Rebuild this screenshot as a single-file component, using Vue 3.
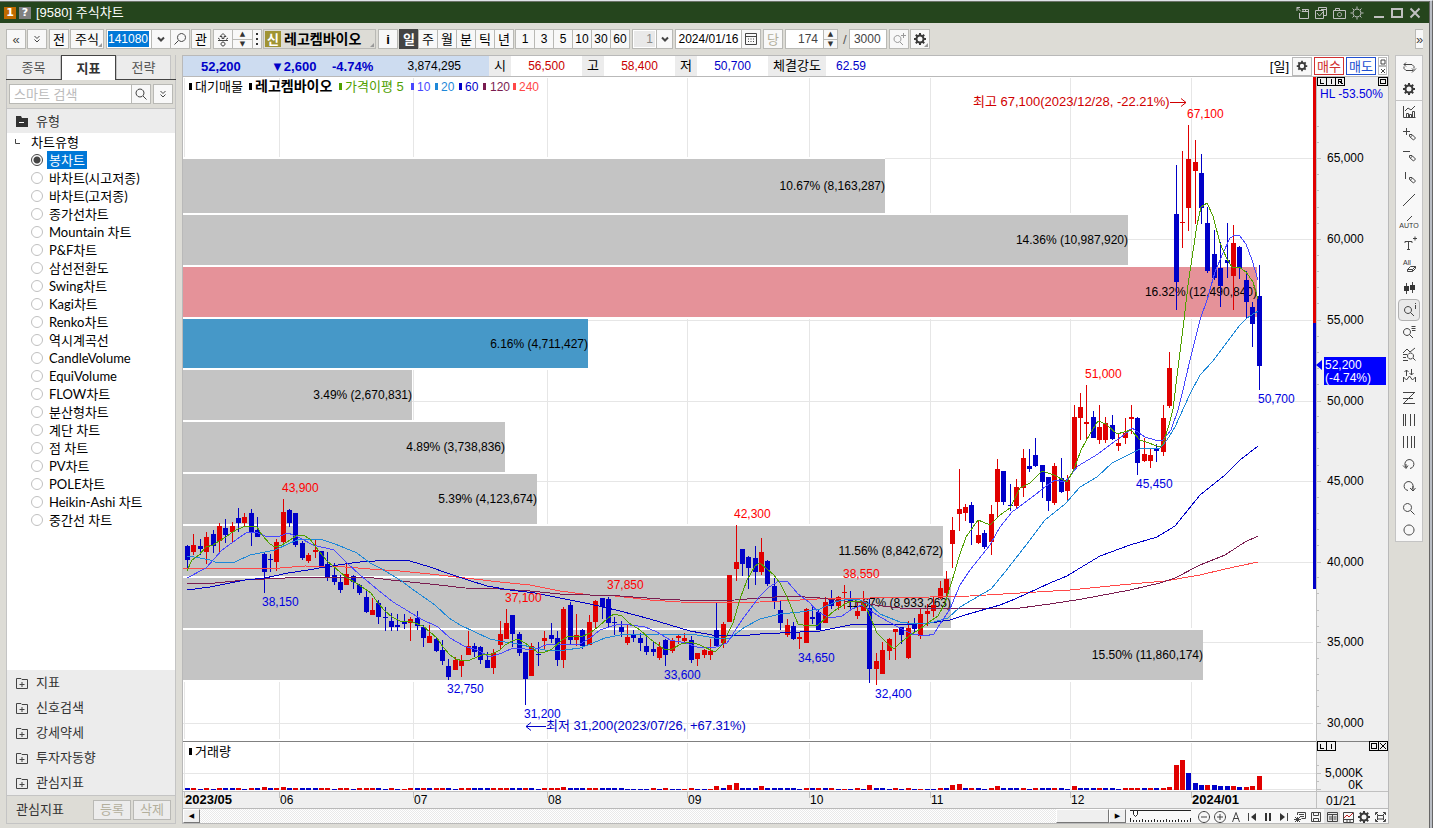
<script setup>
import { ref } from 'vue'

const candleRows = `
545 546 560 568 B|534 545 552 555 R|539 546 549 555 B|532 537 552 564 R|530 534 546 553 B|523 526 541 552 R|519 528 535 543 B|522 526 532 543 R|508 518 523 532 B|513 517 523 526 R
509 513 533 546 B|517 530 537 537 B|553 554 572 593 B|554 559 560 572 B|539 542 562 571 R|499 512 542 546 R|509 510 523 527 B|513 513 545 547 B|541 543 558 560 B|553 555 561 563 R
539 550 552 558 R|551 551 568 568 B|552 564 577 581 B|563 575 582 585 B|575 582 590 593 B|563 574 585 585 R|575 576 582 589 B|584 585 593 595 B|591 597 612 613 B|598 610 615 615 R
600 603 617 624 B|607 617 618 631 B|613 621 627 631 B|614 625 627 631 B|614 621 624 629 B|617 619 623 641 R|611 618 626 630 B|625 627 638 647 B|625 636 643 643 R|638 639 651 652 B
640 650 661 665 B|659 666 677 680 B|657 660 670 670 R|655 660 666 677 R|631 646 655 655 R|643 646 652 657 B|646 647 660 664 B|652 660 668 668 B|649 653 668 674 R|621 634 645 649 R
609 623 639 639 R|615 615 634 647 B|632 634 653 656 B|652 652 679 705 B|643 646 676 676 R|642 654 655 666 B|631 638 641 650 R|623 635 639 643 B|631 638 660 666 B|607 609 660 668 R
602 605 640 644 B|614 635 640 646 R|629 630 646 649 B|615 622 645 645 R|600 601 622 628 R|598 598 607 619 B|597 599 623 627 B|617 622 623 635 B|621 627 632 637 B|625 637 643 645 R
630 635 638 642 B|633 638 643 651 B|637 646 652 655 B|641 649 652 656 B|642 647 658 660 R|639 640 655 666 B|638 641 651 653 R|634 636 638 644 R|633 638 641 642 R|636 640 660 663 B
653 653 659 666 R|649 650 655 658 R|639 651 655 660 R|602 630 646 646 B|622 624 643 648 R|575 575 622 622 R|525 562 569 581 R|549 549 564 576 B|556 557 568 589 B|546 558 572 585 B
538 552 572 575 R|560 561 584 586 B|578 586 601 609 B|600 610 623 630 B|619 625 635 637 R|622 626 639 640 B|633 637 639 649 R|608 609 643 643 R|607 617 619 624 B|609 612 630 630 B
597 602 623 623 R|590 599 606 609 B|596 597 606 610 R|585 592 593 609 R|591 600 602 610 B|602 611 616 619 R|591 601 611 611 R|599 608 669 683 B|653 661 669 685 R|642 650 674 674 R
638 639 651 660 R|629 629 632 660 R|627 627 635 644 B|621 628 658 659 R|618 623 629 632 B|609 614 636 639 R|604 611 614 626 R|597 605 611 617 R|581 588 598 599 R|571 579 593 596 R
517 530 544 568 R|469 509 514 531 R|504 507 513 521 R|502 505 523 545 B|520 535 543 544 R|530 533 547 549 B|505 514 542 555 R|459 469 502 517 R|471 471 502 505 B|484 505 506 511 B
479 487 506 508 R|449 458 488 497 R|449 466 469 472 B|438 455 466 467 B|465 465 482 498 B|477 477 501 511 B|463 466 503 505 R|458 478 492 493 B|475 480 491 500 R|405 417 469 471 R
393 407 418 440 R|385 422 424 440 R|411 417 438 438 B|405 427 440 444 R|417 423 440 443 R|415 425 439 440 B|434 443 446 451 R|418 433 438 444 R|405 417 419 434 R|417 418 463 475 B
438 454 461 462 R|448 455 461 468 R|444 448 451 462 B|405 418 452 456 R|352 368 406 408 R|165 214 282 310 B|151 222 223 248 R|125 159 208 231 R|140 162 171 224 R|154 173 208 224 B
207 223 271 273 B|230 254 278 280 B|242 268 286 307 B|223 260 263 278 B|225 243 276 310 R|246 247 268 279 B|271 280 302 319 B|302 307 324 347 B|265 296 366 390 B`

const slotX = i => Math.round(187 + i * 6.378)
const candles = candleRows.trim().split(/[|\n]/).map((row, i) => {
  const [high, top, bottom, low, tone] = row.trim().split(' ')
  return { x: slotX(i), high: +high, top: +top, bottom: +bottom, low: +low, tone }
})

const volumeTones =
  'BRbRbRBBRb' + 'RBRBRRBRBB' + 'BRRbRRbRRR' + 'BbRbrRBRBR' + 'RBbRRBBBRR' + 'RBBRBbRRRR' +
  'BBBRRBBBBb' + 'bbbRbRbbrR' + 'bbrRBRRBBB' + 'RBBBBBbRBR' + 'BRbrbRbRBB' + 'bRbRbrbbRB' +
  'RRBRBbRRBB' + 'BRbRBBRBbR' + 'BBBRBBbRRR' + 'BRBRRRRBBB' + 'RBBBRBRRR'
const volumePeaks = {
  12: 3, 15: 3, 59: 3, 83: 4, 85: 5, 86: 7, 90: 4, 107: 5, 120: 5, 121: 6, 127: 4, 139: 4, 154: 3,
  155: 25, 156: 30, 157: 17, 158: 7, 159: 5, 160: 5, 161: 5, 162: 4, 163: 4, 164: 4, 165: 3, 166: 3, 167: 4, 168: 14
}
const volumes = [...volumeTones].map((c, i) => ({
  x: slotX(i) - 2,
  h: volumePeaks[i] || (c === c.toUpperCase() ? 2 : 1),
  tone: c.toUpperCase()
}))

const averages = [
  { name: 'ma240', points: '183,568 280,568 305,566 345,567 370,569 400,571 430,574 465,578 500,582 530,585 560,591 590,595 615,596 650,600 680,602 720,603 760,602 800,600 835,598 870,598 930,597 970,596 1020,593 1070,590 1120,585 1165,581 1200,575 1225,569 1258,562' },
  { name: 'ma120', points: '187,583 215,583 245,580 305,577 340,577 365,577 400,581 430,584 465,588 500,589 530,591 560,594 620,596 660,599 700,601 735,600 760,598 790,596 820,598 835,600 855,602 875,605 900,608 930,609 955,608 1020,608 1050,604 1082,599 1130,590 1160,583 1175,578 1200,565 1225,555 1245,542 1258,536' },
  { name: 'ma60', points: '187,589 195,589 210,587 245,580 265,578 288,573 308,570 325,567 345,564 360,562 390,560 410,561 430,567 447,573 468,580 487,586 510,590 535,593 560,598 590,604 620,611 650,619 690,631 712,635 740,636 760,634 800,632 820,631 850,625 870,624 900,625 930,623 950,620 965,615 1000,605 1015,599 1050,583 1067,576 1080,568 1100,556 1130,545 1157,537 1175,526 1200,495 1225,475 1240,460 1258,446' },
  { name: 'ma20', points: '187,556 200,558 210,560 218,563 235,562 250,555 275,550 290,543 300,539 320,539 335,544 345,548 357,553 370,563 382,569 400,580 415,591 435,605 449,618 460,625 475,632 490,639 505,642 518,644 535,648 545,650 565,650 580,648 593,643 605,638 620,635 660,634 685,634 697,635 715,638 730,638 745,627 760,619 780,614 800,612 820,609 835,602 848,599 860,600 870,605 880,614 900,622 915,624 930,623 948,618 960,607 972,600 991,589 1005,572 1030,540 1045,520 1065,504 1080,487 1097,477 1112,463 1140,449 1160,448 1167,440 1175,427 1190,394 1200,375 1213,361 1225,345 1240,325 1247,318 1258,311' },
  { name: 'ma10', points: '187,578 206,568 222,550 240,537 246,533 256,532 265,536 280,536 288,533 300,538 313,545 334,550 346,562 360,575 378,590 393,602 408,611 421,619 438,627 450,638 464,646 477,650 490,657 502,653 513,648 525,649 534,650 548,644 562,644 580,644 590,638 600,630 612,626 620,624 630,625 645,627 657,632 670,640 686,643 697,647 713,648 727,643 742,620 759,597 769,587 779,581 787,581 798,594 809,602 818,612 830,618 842,616 852,609 862,605 868,609 880,617 900,628 912,634 925,636 934,634 940,624 950,609 960,585 970,570 990,545 1000,527 1012,512 1035,495 1046,486 1055,480 1065,482 1078,466 1098,454 1111,444 1124,435 1132,428 1145,437 1155,440 1163,440 1171,430 1178,410 1183,390 1190,360 1200,320 1207,300 1215,272 1223,253 1230,238 1235,235 1239,235 1246,244 1252,260 1258,280' },
  { name: 'ma5', points: '187,571 192,560 199,555 206,547 213,545 219,541 226,537 231,533 238,529 246,526 257,527 262,535 270,544 275,547 282,545 290,540 296,536 303,535 310,539 319,551 327,561 333,566 340,572 347,578 356,583 371,593 378,603 385,611 392,617 400,621 412,622 423,626 430,632 437,638 443,647 450,655 456,659 463,661 470,660 482,655 492,654 500,650 505,645 512,641 518,639 525,643 532,648 537,652 543,653 552,649 562,640 569,636 581,637 590,633 599,626 608,618 614,614 622,616 629,623 640,630 650,639 664,649 672,649 681,644 690,642 700,645 715,652 722,645 733,623 740,599 747,580 755,566 760,563 767,569 774,575 780,583 787,597 798,624 808,626 818,625 826,618 834,611 850,601 860,601 867,609 877,633 888,644 894,649 900,643 912,634 920,629 929,622 938,616 945,603 952,581 959,557 966,537 978,520 990,525 1000,515 1010,508 1020,488 1030,483 1042,471 1054,475 1067,482 1074,469 1081,450 1090,434 1098,421 1106,424 1117,434 1131,430 1140,440 1160,447 1163,444 1169,425 1173,409 1179,360 1184,320 1188,285 1192,258 1197,225 1201,207 1207,203 1213,216 1220,243 1227,259 1232,267 1239,267 1246,272 1253,282 1258,299' }
]

const profile = [
  { y: 159, h: 54, end: 885, text: '10.67% (8,163,287)', tone: 'plain' },
  { y: 215, h: 50, end: 1128, text: '14.36% (10,987,920)', tone: 'plain' },
  { y: 267, h: 50, end: 1257, text: '16.32% (12,490,840)', tone: 'peak' },
  { y: 319, h: 49, end: 588, text: '6.16% (4,711,427)', tone: 'now' },
  { y: 370, h: 50, end: 412, text: '3.49% (2,670,831)', tone: 'plain' },
  { y: 422, h: 50, end: 505, text: '4.89% (3,738,836)', tone: 'plain' },
  { y: 474, h: 50, end: 537, text: '5.39% (4,123,674)', tone: 'plain' },
  { y: 526, h: 50, end: 943, text: '11.56% (8,842,672)', tone: 'plain' },
  { y: 578, h: 50, end: 951, text: '11.67% (8,933,263)', tone: 'plain' },
  { y: 630, h: 50, end: 1203, text: '15.50% (11,860,174)', tone: 'plain' }
]

const peaks = [
  [282, 492, '43,900'], [505, 602, '37,100'], [607, 589, '37,850'], [734, 518, '42,300'],
  [843, 578, '38,550'], [1085, 378, '51,000'], [1187, 118, '67,100']
]
const troughs = [
  [262, 606, '38,150'], [447, 693, '32,750'], [524, 718, '31,200'], [664, 679, '33,600'],
  [798, 662, '34,650'], [875, 698, '32,400'], [1136, 488, '45,450'], [1258, 403, '50,700']
]
const priceTicks = [[158, '65,000'], [239, '60,000'], [320, '55,000'], [401, '50,000'], [481, '45,000'], [562, '40,000'], [642, '35,000'], [723, '30,000']]
const minorTicks = Array.from({ length: 38 }, (_, i) => Math.round(126 + i * 16.12)).filter((y, i) => i % 5 !== 2)
const months = [[184, '2023/05', true], [279, '06'], [413, '07'], [547, '08'], [687, '09'], [809, '10'], [930, '11'], [1070, '12'], [1191, '2024/01', true]]
const legend = [
  [189, 195, '대기매물', '#000'], [249, 255, '레고켐바이오', '#000', 'name'], [339, 345, '가격이평 5', '#50a000'],
  [411, 417, '10', '#4848ff', 'digits'], [435, 441, '20', '#1e88d8', 'digits'], [459, 465, '60', '#0000c8', 'digits'],
  [483, 490, '120', '#7a1d50', 'digits'], [513, 519, '240', '#ff4848', 'digits']
]

const chartTypes = [
  '봉차트', '바차트(시고저종)', '바차트(고저종)', '종가선차트', 'Mountain 차트', 'P&F차트', '삼선전환도', 'Swing차트', 'Kagi차트', 'Renko차트',
  '역시계곡선', 'CandleVolume', 'EquiVolume', 'FLOW차트', '분산형차트', '계단 차트', '점 차트', 'PV차트', 'POLE차트', 'Heikin-Ashi 차트', '중간선 차트'
]
const chosen = ref('봉차트')
const code = ref('141080')
const keyword = ref('')
const groups = ['지표', '신호검색', '강세약세', '투자자동향', '관심지표']
const periods = ['일', '주', '월', '분', '틱', '년']
const minutes = ['1', '3', '5', '10', '30', '60']

const gear = 'M8 2v3M8 11v3M2 8h3M11 8h3M3.8 3.8l2 2M10.2 10.2l2 2M3.8 12.2l2-2M10.2 5.8l2-2'
const topTools = [
  { label: '새로고침', d: 'M5 3.500L3 5.500l2 2M3 5.500h8l2 2v2M11 13.500l2-2M15 9.500l-2 2-2-2M3 7.500v2l2 2h7' },
  { label: '설정', gear: true }
]
const tools = [
  { label: '지표 추가', d: 'M2.500 2v11.500h12M5.500 13V9.500h2V13M8.500 13V10.500h2V13M11.500 13V7.500h2V13M4 7l3-3 3 2 4-4' },
  { label: '십자 그리기', d: 'M2 5.500h7M5.500 2v7M8.500 8.500h2.500l3.500 3.500-2 2L8.500 10.500zM9.500 11l2-2' },
  { label: '수평선', d: 'M2 3.500h7M8.500 7.500h2.500l3.500 3.500-2 2L8.500 9.500zM9.500 10l2-2' },
  { label: '수직선', d: 'M4.500 2v7M8.500 7.500h2.500l3.500 3.500-2 2L8.500 9.500zM9.500 10l2-2' },
  { label: '추세선', d: 'M2 14L14 2' },
  { label: '자동 추세선', d: 'M6 7l5-5', word: 'AUTO' },
  { label: '텍스트', d: 'M4 7V5.500h7V7M7.500 5.500v8M6 13.500h3M12 2.500h4M14 .5v4' },
  { label: '전체 지우기', d: 'M6.500 11.500l3-3h5v2l-3 3h-5zM6.500 11.500h5l3-3M11.500 11.500v2', tiny: 'All' },
  { label: '캔들', d: 'M5.500 3v11M11.500 2v11', fill: 'M3 6h5v5H3zM9 5h5v5H9z' },
  { label: '정보 조회', d: 'M7 4.500a3.500 3.500 0 1 0 .01 0M9.500 10.500l3.500 3.500M14.500 1v1M14.500 3v4', on: true },
  { label: '목록 조회', d: 'M6 4.500a3.500 3.500 0 1 0 .01 0M8.500 10.500l3.500 3.500M10.500 2.500h4M10.500 4.500h4M11 6.500h3.500' },
  { label: '차트 조회', d: 'M2 7l4-4 3 3 5-4M2 8.500h4M2 11.500h3M2 14.500h5M9.500 7a3 3 0 1 0 .01 0M12 12l2.500 2.500' },
  { label: '신호', d: 'M2.500 14V9l3 3 3-4 3 4 3-3v5M5.500 8V2M3.500 4l2-2 2 2M10.500 1v6M8.500 5l2 2 2-2' },
  { label: '지그재그', d: 'M2 2.500h12M2 13.500h12M2 8.500h10M13 3L3 13' },
  { label: '구간선', d: 'M2.500 2v12M4.500 2v12M9.500 2v12M13.500 2v12' },
  { label: '등간격선', d: 'M2.500 2v12M6.500 2v12M10.500 2v12M13.500 2v12' },
  { label: '되돌리기', d: 'M5 11a4.500 4.500 0 1 1 4 1.500M2 9.500l3 3 2-3M5 8v4' },
  { label: '다시 실행', d: 'M11 11a4.500 4.500 0 1 0-4 1.500M9 10l3 3 2.500-3M12 8v5' },
  { label: '확대', d: 'M6.500 3.500a4 4 0 1 0 .01 0M9.500 10.500l4 4' },
  { label: '원', d: 'M8 3a5 5 0 1 0 .01 0' }
]
const footTools = [
  { label: '축소', d: 'M8 2.500a5.500 5.500 0 1 0 .01 0M5 8h6' },
  { label: '확대', d: 'M8 2.500a5.500 5.500 0 1 0 .01 0M5 8h6M8 5v6' },
  { label: '자동', d: 'M4.500 13L8 3.500 11.500 13M5.500 9.500h5' },
  { label: '처음', d: 'M4.500 4v8', fill: 'M12 4v8L7 8z' },
  { label: '정지', fill: 'M5 4h2v8H5zM9 4h2v8H9z' },
  { label: '끝', d: 'M11.500 4v8', fill: 'M4 4v8l5-4z' },
  { label: '지표 삭제', d: 'M5.500 6V3.500h8v6h-4M7 5.500h5M8 7.500h4M3 8l5 5M8 8l-5 5M5.500 8v5M2 10.500h7' },
  { label: '저장', d: 'M3.500 3.500h9v9h-9zM5.500 3.500v3h5v-3M5.500 12.500v-3h5v3' },
  { label: '표', d: 'M3.500 3.500h10v9h-10zM3.500 5.500h10M5 8h3M5 10h3M9.500 8h3M9.500 10h3M8.500 6v6', on: true },
  { label: '미니 차트', d: 'M3.500 3.500h10v10h-10zM3.500 10.500h10M7 10.500v3M10 10.500v3', red: 'M4 9l3-3 2 2 4-4' },
  { label: '설정', gear: true },
  { label: '전체 화면', d: 'M3.500 6V3.500H6M11 3.500h2.500V6M13.500 10v2.500H11M6 12.500H3.500V10M5.500 6.500h6v3.500h-6zM4 4l2 2M13 4l-2 2M4 12l2-2M13 12l-2-2' }
]
</script>

<template>
  <div class="app">
    <header class="title">
      <span class="badge orange">1</span>
      <span class="badge gray">?</span>
      <h1>[9580] 주식차트</h1>
      <div class="win">
        <button aria-label="창 분리"><svg viewBox="0 0 16 16"><path d="M2 6V2.500h3M2 2.500l4 4M7 4.500h6.500v9h-9V8M8 4v2.500M10.500 4v2.500M7 6.500h6" /></svg></button>
        <button aria-label="창 복사"><svg viewBox="0 0 16 16"><path d="M2.500 5.500h8v8h-8zM5.500 5V2.500h8v8h-3M4 8l2.500 3L10 7M8 4.500h5" /></svg></button>
        <button aria-label="화면 캡처"><svg viewBox="0 0 16 16"><path d="M2.500 5.500h12v8h-12zM4.500 5V3.500h4V5M8.500 7.500a2 2 0 1 0 .01 0" /></svg></button>
        <button aria-label="화면 설정"><svg viewBox="0 0 16 16"><path d="M8 4a4 4 0 1 0 .01 0M8 1.500v2M8 12.500v2M1.500 8h2M12.500 8h2M3.500 3.500l1.500 1.500M11 11l1.500 1.500M3.500 12.500L5 11M11 5l1.500-1.500" /></svg></button>
        <button class="big" aria-label="최소화"><svg viewBox="0 0 16 16"><path d="M3 12h10" /></svg></button>
        <button class="big" aria-label="최대화"><svg viewBox="0 0 16 16"><path d="M3 4h10v8H3z" /></svg></button>
        <button class="big" aria-label="닫기"><svg viewBox="0 0 16 16"><path d="M3.500 3.500l9 9M12.500 3.500l-9 9" /></svg></button>
      </div>
    </header>

    <nav class="bar">
      <button class="b sym">«</button>
      <button class="b" aria-label="펼치기"><svg viewBox="0 0 16 16"><path d="M5.500 5L8 7.500 10.500 5M5.500 8.500L8 11l2.500-2.500" /></svg></button>
      <button class="b gap">전</button>
      <button class="b wide fold">주식</button>
      <div class="join gap">
        <div class="field code"><input v-model="code" aria-label="종목코드"></div>
        <button class="b" aria-label="종목 목록"><svg viewBox="0 0 16 16"><path class="bold" d="M5 6.500L8 9.500l3-3" /></svg></button>
        <button class="b" aria-label="종목 찾기"><svg viewBox="0 0 16 16"><path d="M9.500 2.500a4 4 0 1 0 .01 0M6.500 9.500l-4 4" /></svg></button>
      </div>
      <button class="b">관</button>
      <div class="join gap">
        <button class="b" aria-label="순환"><svg viewBox="0 0 16 16"><path d="M3 9.500h10M5 8.500L3 7M11 8.500L13 7M8 2.500L5 5.500h2v2h2v-2h2zM8 11a2 2 0 1 0 .01 0" /></svg></button>
        <div class="spin"><button aria-label="이전 종목">▲</button><button aria-label="다음 종목">▼</button></div>
        <button class="b thin" aria-label="더보기"><svg viewBox="0 0 8 16"><path class="solid" d="M3 2h2v2H3zM3 7h2v2H3zM3 12h2v2H3z" /></svg></button>
      </div>
      <div class="stock"><span class="credit">신</span><strong>레고켐바이오</strong></div>
      <button class="b i gap">i</button>
      <div class="join">
        <button v-for="p in periods" :key="p" class="b" :class="{ dark: p === '일' }">{{ p }}</button>
      </div>
      <div class="join">
        <button v-for="m in minutes" :key="m" class="b num">{{ m }}</button>
      </div>
      <div class="join gap">
        <div class="field unit"><input value="1" disabled aria-label="분 단위"></div>
        <button class="b drop" aria-label="분 단위 목록"><svg viewBox="0 0 16 16"><path class="bold" d="M5 6.500L8 9.500l3-3" /></svg></button>
      </div>
      <div class="join gap">
        <div class="field date"><input value="2024/01/16" aria-label="기준일"></div>
        <button class="b" aria-label="달력"><svg viewBox="0 0 16 16"><path d="M2.500 2.500h11v11h-11zM2.500 5.500h11M5 8h1M7.500 8h1M10 8h1M5 10.500h1M7.500 10.500h1M10 10.500h1" /></svg></button>
      </div>
      <button class="b off gap">당</button>
      <div class="join gap">
        <div class="field count"><input value="174" aria-label="표시 개수"></div>
        <div class="spin slim"><button aria-label="늘리기">▲</button><button aria-label="줄이기">▼</button></div>
      </div>
      <span class="slash">/</span>
      <div class="field total"><input value="3000" aria-label="전체 개수"></div>
      <button class="b off gap" aria-label="추가 조회"><svg viewBox="0 0 16 16"><path d="M6.500 4.500a3.500 3.500 0 1 0 .01 0M9 11l3 3M10 4.500h5M12.500 2v5" /></svg></button>
      <button class="b fold" aria-label="차트 설정"><svg viewBox="0 0 16 16"><path class="cog" :d="gear" /><circle class="ring" cx="8" cy="8" r="3.500" /></svg></button>
      <button class="b more">»</button>
    </nav>

    <main class="body">
      <aside class="side">
        <div class="tabs"><button>종목</button><button class="active">지표</button><button>전략</button></div>
        <div class="find">
          <input v-model="keyword" placeholder="스마트 검색" aria-label="스마트 검색">
          <button class="b" aria-label="검색"><svg viewBox="0 0 16 16"><path d="M7 3a4 4 0 1 0 .01 0M10 10l3.500 3.500" /></svg></button>
          <button class="b gap" aria-label="검색 옵션"><svg viewBox="0 0 16 16"><path d="M5.500 5L8 7.500 10.500 5M5.500 8.500L8 11l2.500-2.500" /></svg></button>
        </div>
        <h2 class="group"><svg viewBox="0 0 12 12"><path class="solid" d="M0 1h5l1 2h6v9H0z" /><path class="cut" d="M3 7.500h5" /></svg>유형</h2>
        <div class="list">
          <h3><svg viewBox="0 0 6 6"><path d="M.5 0v4.500H5" /></svg>차트유형</h3>
          <label v-for="t in chartTypes" :key="t" :class="{ chosen: chosen === t }">
            <input v-model="chosen" type="radio" name="chart-type" :value="t"><span>{{ t }}</span>
          </label>
        </div>
        <h2 v-for="g in groups" :key="g" class="group"><svg viewBox="0 0 12 12"><path d="M.5 1.500H5l1 1h5.500v9H.5zM3.500 7.500h5M6 5v5" /></svg>{{ g }}</h2>
        <div class="foot"><span>관심지표</span><button disabled>등록</button><button disabled>삭제</button></div>
      </aside>

      <section class="panel">
        <div class="quote">
          <div class="price"><b class="p1">52,200</b><b class="p2">▼2,600</b><b class="p3">-4.74%</b><span class="p4">3,874,295</span></div>
          <span class="lab">시</span><span class="val up">56,500</span>
          <span class="lab">고</span><span class="val up">58,400</span>
          <span class="lab">저</span><span class="val down">50,700</span>
          <span class="lab long">체결강도</span><span class="down strength">62.59</span>
          <span class="day">[일]</span>
          <button class="mini" aria-label="설정"><svg viewBox="0 0 16 16"><path class="cog" :d="gear" /><circle class="ring" cx="8" cy="8" r="3.500" /></svg></button>
          <button class="trade buy">매수</button>
          <button class="trade sell">매도</button>
          <div class="stack">
            <button aria-label="최대화"><svg viewBox="0 0 8 8"><path d="M2 2h4v4H2z" /></svg></button>
            <button aria-label="닫기"><svg viewBox="0 0 8 8"><path d="M2 2l4 4M6 2L2 6" /></svg></button>
          </div>
        </div>

        <svg class="chart" viewBox="183 77 1205 731" role="img" aria-label="레고켐바이오 일봉 차트">
          <g class="crisp">
            <rect x="1316" y="77" width="72" height="731" class="axis-bg" />
            <rect x="183" y="791" width="1205" height="17" class="axis-bg" />
            <path v-for="m in months" :key="'v' + m[0]" class="grid" :d="`M${m[0] + .5} 78V739M${m[0] + .5} 743V790`" />
            <path v-for="t in priceTicks" :key="'h' + t[0]" class="grid" :d="`M183 ${t[0] + .5}H1313`" />
            <path class="grid" d="M183 773.500H1316M183 789.500H1316" />
            <rect v-for="p in profile" :key="p.text" x="183" :y="p.y - 2" :width="p.end - 183" :height="p.h + 4" class="halo" />
            <rect v-for="p in profile" :key="'b' + p.text" x="183" :y="p.y" :width="p.end - 183" :height="p.h" :class="p.tone" />
          </g>
          <text v-for="p in profile" :key="'t' + p.text" :x="p.end" :y="p.y + Math.round(p.h / 2) + 4" text-anchor="end">{{ p.text }}</text>

          <g class="crisp">
            <g v-for="(c, i) in candles" :key="i" :class="c.tone">
              <rect :x="c.x" :y="c.high" width="1" :height="c.low - c.high" />
              <rect :x="c.x - 2" :y="c.top" width="5" :height="c.bottom - c.top" />
            </g>
            <polyline v-for="a in averages" :key="a.name" :points="a.points" class="ma" :class="a.name" />
            <rect v-for="(v, i) in volumes" :key="'q' + i" :class="v.tone" :x="v.x" :y="790 - v.h" width="5" :height="v.h" />
            <path class="split" d="M183 741.500H1388" />
            <path class="edge" d="M1316.500 77V808M183 791.500H1388" />
            <path v-for="m in months" :key="'k' + m[0]" class="edge" :d="`M${m[0] + .5} 792v6`" />
            <path v-for="t in priceTicks" :key="'m' + t[0]" class="edge" :d="`M1317 ${t[0] + .5}h4`" />
            <path v-for="y in minorTicks" :key="'n' + y" class="edge" :d="`M1317 ${y + .5}h2`" />
            <path class="edge" d="M1317 765.500h2M1317 773.500h4M1317 781.500h2M1317 789.500h4" />
            <rect class="R" x="1313" y="77" width="3" height="246" />
            <rect class="B" x="1313" y="323" width="3" height="266" />
          </g>

          <text v-for="p in peaks" :key="p[2]" :x="p[0]" :y="p[1]" class="peak-text">{{ p[2] }}</text>
          <text v-for="p in troughs" :key="p[2]" :x="p[0]" :y="p[1]" class="trough-text">{{ p[2] }}</text>
          <text x="973" y="106" class="note high">최고 67,100(2023/12/28, -22.21%)</text>
          <path class="arrow high-line" d="M1170 102.500h16M1181 98.500l5 4-5 4" />
          <text x="546" y="730" class="note low">최저 31,200(2023/07/26, +67.31%)</text>
          <path class="arrow low-line" d="M546 726.500h-20M531 722.500l-5 4 5 4" />

          <g v-for="l in legend" :key="l[2]" :fill="l[3]">
            <rect :x="l[0]" y="83" width="3" height="7" /><text :x="l[1]" y="91" class="legend" :class="l[4]">{{ l[2] }}</text>
          </g>
          <g fill="#000">
            <rect x="189" y="748" width="3" height="7" /><text x="195" y="756" class="legend">거래량</text>
          </g>

          <text v-for="t in priceTicks" :key="t[1]" x="1327" :y="t[0] + 4">{{ t[1] }}</text>
          <text x="1320" y="98" class="hl">HL -53.50%</text>
          <path class="tag" d="M1316 365l6-5v10zM1324 357h62v28h-62z" />
          <text x="1325" y="369" class="on-tag">52,200</text><text x="1325" y="382" class="on-tag">(-4.74%)</text>
          <text x="1363" y="777" text-anchor="end">5,000K</text><text x="1363" y="789" text-anchor="end">0K</text>
          <text x="1326" y="805">01/21</text>
          <text v-for="m in months" :key="'d' + m[0]" :x="m[0] + 1" y="804" :class="{ heavy: m[2] }">{{ m[1] }}</text>

          <g class="marks">
            <path d="M1317.500 77.500h27v8h-27zM1326.500 77.500v8M1335.500 77.500v8M1378.500 77.500h9v8h-9zM1380.500 79.500h5v4h-5z" />
            <path d="M1320.500 79v4.500h3M1331.500 79v5M1338.500 84v-4.500h3v2h-3M1340.500 82l2 2" />
            <path d="M1317.500 741.500h18v9h-18zM1326.500 741.500v9M1369.500 741.500h18v9h-18zM1378.500 741.500v9M1371.500 743.500h5v5h-5zM1380 743l6 6M1386 743l-6 6" />
            <path d="M1320.500 743.500v5h3M1331.500 743.500v5" />
          </g>
        </svg>

        <div class="scroll">
          <button class="raised" aria-label="왼쪽으로">◀</button>
          <div class="track"><button class="raised thumb" aria-label="스크롤 위치"></button></div>
          <button class="raised" aria-label="오른쪽으로">▶</button>
          <svg class="zoom" viewBox="0 0 62 13"><path d="M0 1.500h61" /><path d="M.5 9v4M3.500 11v2M6.500 11v2M9.500 11v2M12.500 10v3M15.500 11v2M18.500 11v2M21.500 11v2M24.500 10v3M27.500 11v2M30.500 11v2M33.500 11v2M36.500 10v3M39.500 11v2M42.500 11v2M45.500 11v2M48.500 10v3M51.500 11v2M54.500 11v2M57.500 11v2M60.500 9v4" /><path class="knob" d="M3.500 1.500h4v4l-2 2-2-2z" /></svg>
          <button v-for="t in footTools" :key="t.label" class="ft" :class="{ on: t.on }" :aria-label="t.label">
            <svg viewBox="0 0 16 16"><template v-if="t.gear"><path class="cog" :d="gear" /><circle class="ring" cx="8" cy="8" r="3.500" /></template><path v-if="t.d" :d="t.d" /><path v-if="t.fill" class="solid" :d="t.fill" /><path v-if="t.red" class="redline" :d="t.red" /></svg>
          </button>
        </div>
      </section>

      <aside class="tools">
        <div class="first">
          <button v-for="t in topTools" :key="t.label" :aria-label="t.label">
            <svg viewBox="0 0 16 16"><template v-if="t.gear"><path class="cog" :d="gear" /><circle class="ring" cx="8" cy="8" r="3.500" /></template><path v-if="t.d" :d="t.d" /></svg>
          </button>
        </div>
        <button v-for="t in tools" :key="t.label" :class="{ on: t.on }" :aria-label="t.label">
          <svg viewBox="0 0 16 16"><path v-if="t.d" :d="t.d" /><path v-if="t.fill" class="solid" :d="t.fill" /><text v-if="t.word" x="8" y="14" text-anchor="middle" class="micro">{{ t.word }}</text><text v-if="t.tiny" x="2" y="7" class="micro">{{ t.tiny }}</text></svg>
        </button>
      </aside>
    </main>
  </div>
</template>

<style>
body { margin: 0; background: #dddcd6; }
</style>

<style scoped>
* { box-sizing: border-box; }
.app { min-height: 100vh; background: #dddcd6; border-top: 1px solid #dfe2e8; border-right: 1px solid #666; box-shadow: inset -2px 0 #b9bdc4, inset -3px 0 #666; padding-right: 3px; font: 12px/1 "Liberation Sans", "Noto Sans CJK KR", sans-serif; color: #000; }
button, input { font: inherit; color: inherit; padding: 0; margin: 0; border-radius: 0; }
button { border: 0; background: none; display: flex; align-items: center; justify-content: center; flex: none; }
svg { fill: none; stroke: #444; stroke-width: 1; display: block; flex: none; }
svg .solid { fill: #333; stroke: none; }
svg .bold { stroke-width: 2; }
svg .cog { stroke-width: 2; stroke: #3a3a3a; }
svg .ring { stroke-width: 2; stroke: #3a3a3a; }

.title { height: 22px; background: #25451d; border-top: 1px solid #6c7268; display: flex; align-items: center; padding-left: 4px; color: #fff; }
.badge { width: 12px; height: 12px; margin-right: 3px; font: bold 11px/12px "DejaVu Sans", sans-serif; text-align: center; }
.badge.orange { background: #c06a00; }
.badge.gray { background: #808080; }
h1 { font: 13px/20px "Liberation Sans", "Noto Sans CJK KR", sans-serif; margin: 0 auto 0 2px; }
.win { display: flex; align-items: center; padding-right: 5px; }
.win button { width: 18px; height: 20px; }
.win svg { width: 16px; height: 16px; stroke: #c0c0c0; }
.win .big svg { stroke-width: 2; }
.win .big:nth-child(5) { margin-left: 4px; }

.bar { height: 32px; display: flex; align-items: center; padding-left: 6px; gap: 1px; font-size: 13px; }
.b { width: 20px; height: 20px; border: 1px solid #b9b9b5; background: #f8f8f8; white-space: nowrap; }
.b svg { width: 16px; height: 16px; }
.gap { margin-left: 1px; }
.join { display: flex; }
.join > * + * { margin-left: -1px; }
.wide { width: 34px; }
.fold { position: relative; }
.fold::after, .stock::after { content: ""; position: absolute; right: 1px; bottom: 1px; border: 2px solid; border-color: transparent #999 #999 transparent; }
.sym, .more { color: #444; font-size: 13px; }
.thin { width: 10px; }
.thin svg { width: 8px; }
.num { font-size: 12px; }
.i { font-weight: bold; }
.dark { background: #444; border-color: #444; color: #fff; font-weight: bold; }
.off { color: #b3af9c; }
.off svg { stroke: #999; }
.field { height: 20px; border: 1px solid #b9b9b5; background: #fff; padding: 1px; font-size: 12px; }
.field input { width: 100%; height: 16px; border: 0; background: none; display: block; outline: 0; }
.code { width: 46px; }
.code input { background: #0078d7; color: #fff; width: 41px; }
.unit { width: 25px; }
.unit input { background: #e9e9e9; color: #888; text-align: right; padding-right: 2px; }
.drop { width: 17px; }
.date { width: 67px; }
.date input { text-align: center; }
.count { width: 39px; }
.total { width: 38px; margin-left: 1px; }
.count input, .total input { text-align: right; color: #444; padding-right: 4px; }
.slash { color: #555; margin-left: 4px; }
.spin { width: 21px; height: 20px; display: flex; flex-direction: column; border: 1px solid #b9b9b5; background: #f8f8f8; }
.spin.slim { width: 15px; }
.spin button { height: 9px; width: 100%; font: 7px/9px "DejaVu Sans", sans-serif; color: #333; }
.spin button + button { border-top: 1px solid #b9b9b5; }
.stock { width: 113px; height: 20px; border: 1px solid #b9b9b5; position: relative; display: flex; align-items: center; gap: 3px; padding-left: 1px; white-space: nowrap; }
.stock strong { font-size: 14px; }
.credit { width: 16px; height: 16px; background: #a09434; color: #fff; font: bold 13px/16px "Noto Sans CJK KR", sans-serif; text-align: center; }
.more { width: 8px; border-right: 0; margin-left: auto; margin-right: 6px; overflow: hidden; }

.body { display: flex; padding: 0 6px 4px; align-items: flex-start; }
.side { width: 170px; flex: none; margin-right: 6px; align-self: stretch; display: flex; flex-direction: column; border: solid #c4c4c4; border-width: 0 1px 1px; color: #333; font-size: 13px; }
.tabs { display: flex; height: 25px; border-bottom: 1px solid #444; margin: 0 -1px; flex: none; }
.tabs button { width: 55px; border: 1px solid #c4c4c4; border-bottom: 0; background: #ececec; color: #555; }
.tabs .active { border-color: #444; background: #fff; color: #333; font-weight: bold; height: 25px; }
.find { display: flex; padding: 4px 2px; height: 28px; flex: none; }
.find input { width: 122px; height: 20px; border: 1px solid #b9b9b5; border-right: 0; background: #fff; padding-left: 4px; outline: 0; }
.find input::placeholder { color: #bbb; opacity: 1; }
.find .gap { margin-left: 2px; }
.group { height: 25px; margin: 0; padding-left: 9px; display: flex; align-items: center; gap: 8px; background: #ececec; font-weight: normal; font-size: 13px; flex: none; }
.find + .group { border-top: 1px solid #c4c4c4; }
.group svg { width: 12px; height: 12px; }
svg .cut { stroke: #fff; }
.list { flex: 1; background: #fff; color: #000; font: 13px/18px Lato, "Noto Sans CJK KR", sans-serif; }
.list h3 { margin: 0; height: 18px; padding-left: 8px; display: flex; align-items: center; gap: 10px; font: inherit; }
.list h3 svg { width: 6px; height: 6px; }
.list label { display: flex; align-items: center; height: 18px; padding-left: 24px; gap: 4px; }
.list span { padding: 0 2px; line-height: 18px; height: 18px; white-space: nowrap; }
.chosen span { background: #0078d7; color: #fff; }
.list input { appearance: none; width: 12px; height: 12px; border: 1px solid #c0c0c0; border-radius: 50%; background: #fff; }
.list input:checked { border-color: #444; background: radial-gradient(#444 0 3px, #fff 4px); }
.foot { height: 28px; flex: none; border-top: 1px solid #c4c4c4; display: flex; align-items: center; gap: 2px; padding: 0 4px 0 9px; }
.foot span { flex: 1; font-size: 13px; }
.foot button { width: 38px; height: 20px; border: 1px solid #b9b9b5; background: #ececec; color: #b3af9c; }

.panel { flex: 1; min-width: 0; border: 1px solid #b9b9b9; background: #fff; }
.quote { height: 21px; border-bottom: 1px solid #b9b9b9; display: flex; align-items: center; white-space: nowrap; }
.price { width: 306px; height: 20px; background: #cddcf0; display: flex; align-items: center; }
.price b { font-size: 13px; color: #0000c8; }
.p1 { width: 88px; padding-left: 18px; }
.p2 { width: 61px; }
.p3 { width: 69px; }
.p4 { width: 60px; text-align: right; }
.lab { width: 22px; line-height: 20px; background: #ececec; text-align: center; font-size: 13px; }
.long { width: 58px; }
.val { width: 71px; text-align: center; }
.strength { margin-left: 10px; }
.up { color: #c80000; }
.down { color: #0000c8; }
.day { margin-left: auto; margin-right: 3px; font-size: 13px; }
.mini { width: 20px; height: 19px; border: 1px solid #b9b9b9; background: #f8f8f8; margin-right: 2px; }
.mini svg { width: 14px; height: 14px; }
.trade { width: 30px; height: 18px; border: 1px solid; margin-right: 2px; font-size: 13px; }
.buy { color: #d03030; }
.sell { color: #2050d0; }
.stack { margin-right: 1px; }
.stack button { width: 9px; height: 9px; border: 1px solid #b9b9b9; }
.stack svg { width: 8px; height: 8px; }

.chart { width: 100%; height: auto; stroke: none; }
.chart text { fill: #000; font-size: 12px; }
.crisp, .marks { shape-rendering: crispEdges; }
.axis-bg { fill: #efefef; }
.grid { stroke: #e6e6e6; }
.halo { fill: #fff; }
.plain { fill: #c4c4c4; }
.peak { fill: #e59299; }
.now { fill: #4698c8; }
.R { fill: #e00000; }
.B { fill: #0000c8; }
.ma5 { stroke: #50a000; }
.ma10 { stroke: #4848ff; }
.ma20 { stroke: #1e88d8; }
.ma60 { stroke: #0000c8; }
.ma120 { stroke: #7a1d50; }
.ma240 { stroke: #ff4848; }
.split { stroke: #808080; }
.edge { stroke: #c0c0c0; }
.chart .peak-text { fill: #f00; }
.chart .trough-text, .chart .hl { fill: #0000e0; }
.chart .note { font-size: 13px; }
.chart .high { fill: #d00000; }
.chart .low { fill: #0000c8; }
.high-line { stroke: #d00000; }
.low-line { stroke: #0000c8; }
.chart .legend { fill: inherit; font-size: 13px; }
.chart .digits { font-size: 12px; }
.chart .name { font-size: 14px; font-weight: bold; }
.chart .heavy { font-weight: bold; font-size: 13px; }
.tag { fill: #00f; }
.chart .on-tag { fill: #fff; }
.marks { stroke: #000; }
.arrow, .ma, .marks path { fill: none; }

.scroll { height: 15px; border-top: 1px solid #b9b9b9; display: flex; align-items: stretch; background: #f8f8f8; }
.raised { width: 17px; background: #efefef; border: 1px solid; border-color: #fff #777 #777 #fff; font: 7px/1 "DejaVu Sans", sans-serif; color: #000; }
.track { flex: 1; display: flex; justify-content: flex-end; background: repeating-conic-gradient(#e9e9e9 0 25%, #fff 0 50%) 0 0 / 2px 2px; }
.thumb { width: 53px; }
.zoom { width: 62px; height: 13px; margin: 0 4px; stroke: #222; }
.knob { fill: #fff; }
.ft { width: 16px; }
.ft.on { background: #e4e4e4; }
.ft svg { width: 16px; height: 16px; margin-top: 1px; }
svg .redline { stroke: #c02020; }

.tools { width: 28px; flex: none; margin-left: 6px; border: 1px solid #c4c4c4; background: #f8f8f8; }
.tools button { width: 22px; height: 22px; margin: 0 2px; border: 1px solid transparent; border-radius: 4px; }
.tools .on { border-color: #b0b0b0; background: #e9e9e9; }
.tools svg { width: 16px; height: 16px; overflow: visible; }
.first { border-bottom: 1px solid #c4c4c4; }
.micro { font-size: 7px; fill: #333; stroke: none; }
</style>
